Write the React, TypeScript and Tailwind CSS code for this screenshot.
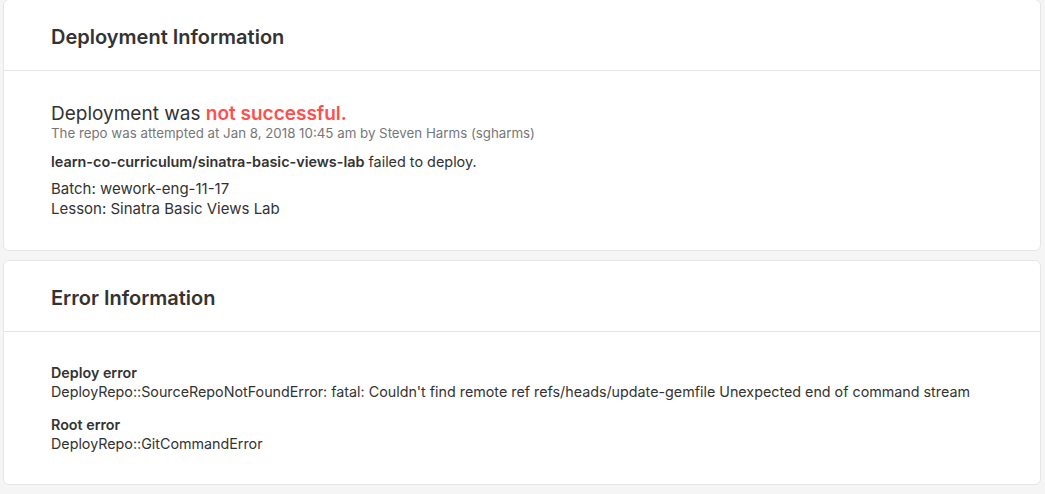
import React from 'react';

function Card({ title, children, className }: { title: string; children: React.ReactNode; className?: string }) {
  return (
    <div className={`bg-white border border-[#e6e6e6] rounded-md ${className ?? ''}`}>
      <div className="h-[71px] flex items-center pt-[3px] px-[47px] border-b border-[#e6e6e6]">
        <h2 className="text-[20px] font-semibold text-[#333]">{title}</h2>
      </div>
      {children}
    </div>
  );
}

export default function App() {
  return (
    <div
      className="min-h-[494px] bg-[#f5f5f5] pl-[3px] pr-[4px] pb-[9px] text-[#333]"
      style={{ fontFamily: 'Inter, "Noto Sans", sans-serif' }}
    >
      <Card title="Deployment Information" className="-mt-px">
        <div className="px-[47px] pt-[32px] pb-[31px]">
          <p className="text-[19px] leading-[22px]">
            Deployment was <span className="font-semibold text-[#ff4f4f]">not successful.</span>
          </p>
          <p className="text-[13.3px] leading-[16px] text-[#777]">
            The repo was attempted at Jan 8, 2018 10:45 am by Steven Harms (sgharms)
          </p>
          <p className="text-[14.4px] leading-[20px] mt-[11px]">
            <span className="font-semibold">learn-co-curriculum/sinatra-basic-views-lab</span> failed to deploy.
          </p>
          <div className="text-[15px] leading-[20px] mt-[7px]">
            <p>Batch: wework-eng-11-17</p>
            <p>Lesson: Sinatra Basic Views Lab</p>
          </div>
        </div>
      </Card>
      <Card title="Error Information" className="mt-[9px]">
        <div className="px-[47px] pt-[31px] pb-[31px] text-[14.3px] leading-[19px]">
          <div>
            <p className="font-semibold">Deploy error</p>
            <p>
              DeployRepo::SourceRepoNotFoundError: fatal: Couldn't find remote ref refs/heads/update-gemfile Unexpected end of command stream
            </p>
          </div>
          <div className="mt-[14px]">
            <p className="font-semibold">Root error</p>
            <p>DeployRepo::GitCommandError</p>
          </div>
        </div>
      </Card>
    </div>
  );
}
